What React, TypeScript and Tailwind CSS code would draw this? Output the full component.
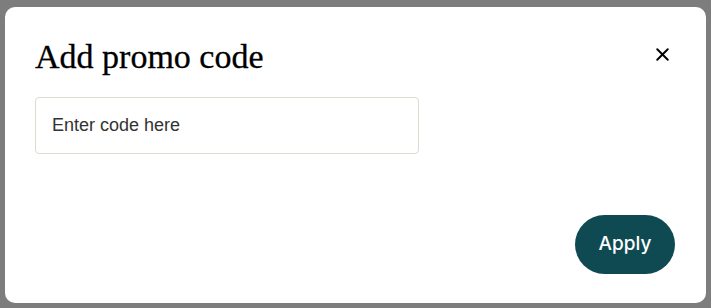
import { X } from "lucide-react";

export default function App() {
  return (
    <div className="flex h-[308px] w-[711px] bg-[#7d7d7d] px-[5px] pt-[7px] pb-[5px]">
      <div className="flex flex-1 flex-col rounded-[10px] bg-white pl-[30px] pr-[31px]">
        <div className="flex items-start justify-between pt-[30px]">
          <h2 className="text-[34px] leading-[40px] text-black [font-family:'Liberation_Serif',serif] [-webkit-text-stroke:0.3px_black]">
            Add promo code
          </h2>
          <button className="mt-[5px] mr-[1px] flex h-6 w-6 items-center justify-center text-black">
            <X className="h-[21px] w-[21px]" strokeWidth={2.3} />
          </button>
        </div>
        <input
          className="mt-[20px] h-[57px] w-[384px] rounded-[4px] border border-[#dedad0] px-4 text-[18px] text-[#333] outline-none placeholder:text-[#333] [font-family:'Liberation_Sans',sans-serif]"
          placeholder="Enter code here"
        />
        <div className="mt-auto flex justify-end pb-[29px]">
          <button className="h-[59px] w-[100px] rounded-full bg-[#0f4a52] text-[19px] font-medium text-white [font-family:Inter,sans-serif]">
            Apply
          </button>
        </div>
      </div>
    </div>
  );
}
